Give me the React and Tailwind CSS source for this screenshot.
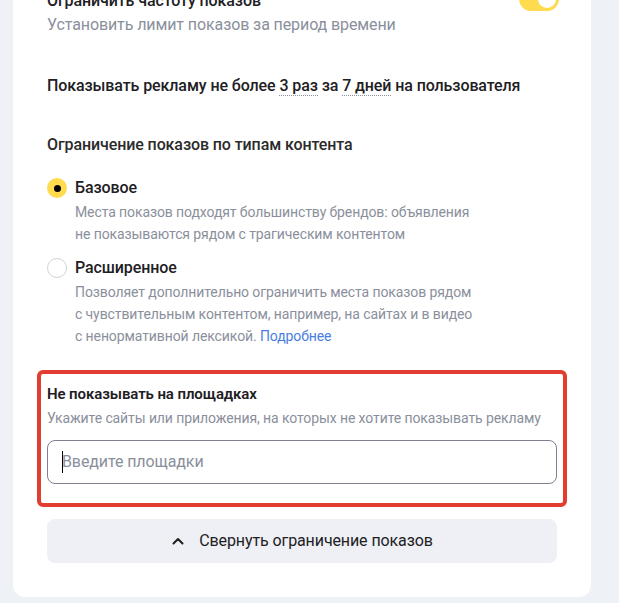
import React from 'react';

function Radio({ checked }) {
  if (checked) {
    return (
      <span className="w-5 h-5 rounded-full bg-[#ffdb4d] flex items-center justify-center shrink-0">
        <span className="block w-[7px] h-[7px] rounded-full bg-black" />
      </span>
    );
  }
  return <span className="block w-5 h-5 rounded-full border border-[#d0d3da] bg-white shrink-0" />;
}

function Option({ checked, title, children }) {
  return (
    <div className="flex gap-2">
      <div className="pt-[2px]">
        <Radio checked={checked} />
      </div>
      <div>
        <p className="text-[16px] leading-6 font-medium text-[#21201f]">{title}</p>
        <p className="text-[14px] leading-[22px] text-[#8a8f9c] mt-[1px]">{children}</p>
      </div>
    </div>
  );
}

export default function App() {
  return (
    <div className="min-h-[603px] bg-[#eef1f6] pl-[13px] pr-[28px] overflow-hidden tracking-[-0.1px]" style={{ fontFamily: 'Roboto, sans-serif' }}>
      <div className="bg-white rounded-b-[12px] -mt-[11px] pt-0 pb-[34px] px-[34px] text-[#21201f]">
        <div className="flex justify-between items-start">
          <div>
            <p className="text-[16px] leading-6 font-medium">Ограничить частоту показов</p>
            <p className="text-[16px] leading-6 text-[#8a8f9c]">Установить лимит показов за период времени</p>
          </div>
          <div className="w-[40px] h-[24px] rounded-full bg-[#ffdb4d] flex items-center justify-end pr-[3px] mt-[-2px] mr-[-2px]">
            <span className="block w-[18px] h-[18px] rounded-full bg-white" />
          </div>
        </div>

        <p className="mt-[37px] text-[16px] leading-6 font-medium">
          Показывать рекламу не более{' '}
          <span className="border-b border-dotted border-[#8a8f9c]">3 раз</span> за{' '}
          <span className="border-b border-dotted border-[#8a8f9c]">7 дней</span> на пользователя
        </p>

        <p className="mt-[35px] text-[16px] leading-6 font-medium text-[#2b2b2b]">Ограничение показов по типам контента</p>

        <div className="mt-[19px] flex flex-col gap-[11px]">
          <Option checked title="Базовое">
            Места показов подходят большинству брендов: объявления
            <br />
            не показываются рядом с трагическим контентом
          </Option>
          <Option title="Расширенное">
            Позволяет дополнительно ограничить места показов рядом
            <br />
            с чувствительным контентом, например, на сайтах и в видео
            <br />
            с ненормативной лексикой. <span className="text-[#4a7ee0]">Подробнее</span>
          </Option>
        </div>

        <div className="mt-[23px] -mx-[10px] border-[4px] border-[#e23d31] rounded-[6px] px-[6px] pt-[8px] pb-[19px]">
          <p className="text-[15px] leading-6 font-semibold">Не показывать на площадках</p>
          <p className="text-[14px] leading-6 text-[#8a8f9c] whitespace-nowrap">
            Укажите сайты или приложения, на которых не хотите показывать рекламу
          </p>
          <div className="mt-[10px] h-[44px] rounded-[8px] border border-[#7d8190] flex items-center px-[14px]">
            <span className="block w-px h-[22px] bg-black -mr-px" />
            <span className="text-[16px] text-[#8a8f9c]">Введите площадки</span>
          </div>
        </div>

        <button className="mt-[12px] w-full h-[44px] rounded-[8px] bg-[#eef0f5] flex items-center justify-center gap-[14px] text-[16px] text-[#21201f]">
          <svg width="14" height="14" viewBox="0 0 14 14" fill="none">
            <path d="M2.5 9.5L7 5l4.5 4.5" stroke="#21201f" strokeWidth="2" strokeLinecap="round" strokeLinejoin="round" />
          </svg>
          Свернуть ограничение показов
        </button>
      </div>
    </div>
  );
}
